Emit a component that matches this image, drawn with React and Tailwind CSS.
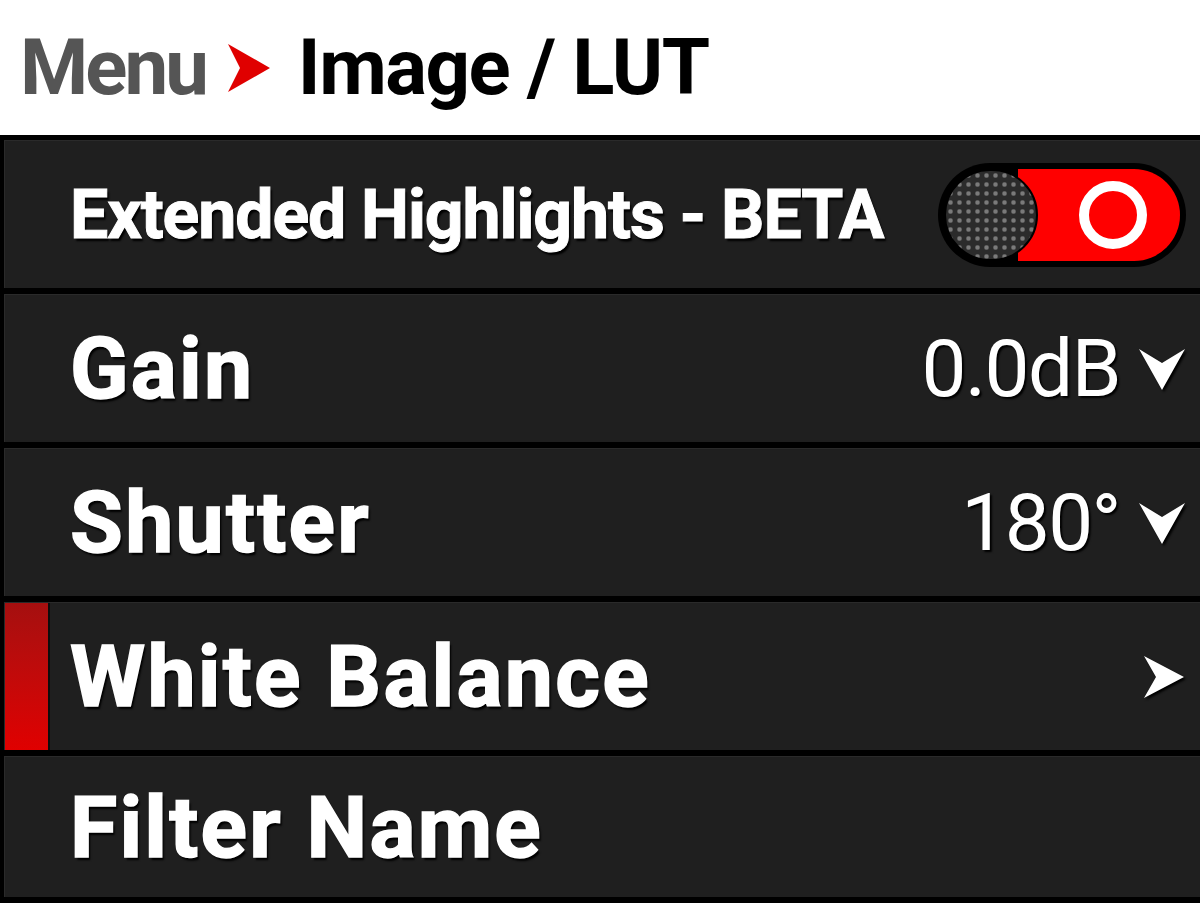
import { useState } from 'react';

const font = { fontFamily: 'Roboto, "Noto Sans", sans-serif' };

function ChevronDown() {
  return (
    <svg width="48" height="46" viewBox="0 0 48 46" className="drop-shadow-[2px_2px_1px_#000]">
      <path d="M1 3 L24 44 L47 3 L24 17 Z" fill="#fff" />
    </svg>
  );
}

function ChevronRight() {
  return (
    <svg width="44" height="46" viewBox="0 0 44 46" className="drop-shadow-[2px_2px_1px_#000]">
      <path d="M2 2 L42 23 L2 44 L14 23 Z" fill="#fff" />
    </svg>
  );
}

function Toggle() {
  return (
    <div className="w-[248px] h-[104px] rounded-full bg-black p-[6px] flex items-center relative">
      <div className="absolute right-[6px] top-[6px] bottom-[6px] left-[80px] rounded-r-full bg-[#ff0000]" />
      <div className="relative w-[94px] h-[92px] rounded-full bg-[#2a2a2a] bg-[radial-gradient(circle,#7a7a7a_1.5px,#2b2b2b_3px)] bg-[length:9px_9px] border-2 border-black" />
      <div className="relative ml-auto mr-[33px] w-[68px] h-[68px] rounded-full border-[10px] border-white" />
    </div>
  );
}

function Row({ label, value, arrow, selected, small, last }) {
  return (
    <div className={`flex items-center bg-[#1f1f1f] border-t border-l border-[#2a2a2a] ${last ? 'flex-1' : 'h-[148px]'}`}>
      {selected ? (
        <div className="w-[45px] self-stretch bg-gradient-to-b from-[#a50f0f] to-[#e00000] border-r-2 border-[#0d0d0d]" />
      ) : (
        <div className="w-[45px]" />
      )}
      <div
        className={`ml-[20px] text-white font-bold [text-shadow:2px_3px_2px_#000] ${small ? 'text-[68px] tracking-[-1.1px] [-webkit-text-stroke:1px_#fff]' : 'text-[86px] tracking-[2.2px] [-webkit-text-stroke:1.5px_#fff]'}`}
      >
        {label}
      </div>
      <div className="ml-auto flex items-center pr-[14px]">
        {value && (
          <span className="text-white text-[80px] font-normal tracking-[-1.5px] [text-shadow:2px_2px_2px_#000] mr-[18px]">{value}</span>
        )}
        {arrow === 'down' && <ChevronDown />}
        {arrow === 'right' && <ChevronRight />}
        {arrow === 'toggle' && <Toggle />}
      </div>
    </div>
  );
}

export default function App() {
  const [rows] = useState([
    { label: 'Extended Highlights - BETA', arrow: 'toggle', small: true },
    { label: 'Gain', value: '0.0dB', arrow: 'down' },
    { label: 'Shutter', value: '180°', arrow: 'down' },
    { label: 'White Balance', arrow: 'right', selected: true },
    { label: 'Filter Name' },
  ]);

  return (
    <div style={font} className="w-[1200px] h-[903px] bg-black flex flex-col overflow-hidden">
      <div className="h-[135px] bg-white flex items-center pl-[20px] shrink-0">
        <span className="text-[78px] font-bold text-[#555] tracking-[-3px]">Menu</span>
        <svg width="46" height="52" viewBox="0 0 46 52" className="ml-[20px] mr-[26px]">
          <path d="M2 2 L44 26 L2 50 L14 26 Z" fill="#e00000" />
        </svg>
        <span className="text-[78px] font-bold text-black tracking-[-1.5px]">Image / LUT</span>
      </div>
      <div className="flex-1 flex flex-col gap-[6px] pt-[5px] pb-[6px] pl-[4px]">
        {rows.map((r, i) => (
          <Row key={r.label} {...r} last={i === rows.length - 1} />
        ))}
      </div>
    </div>
  );
}
